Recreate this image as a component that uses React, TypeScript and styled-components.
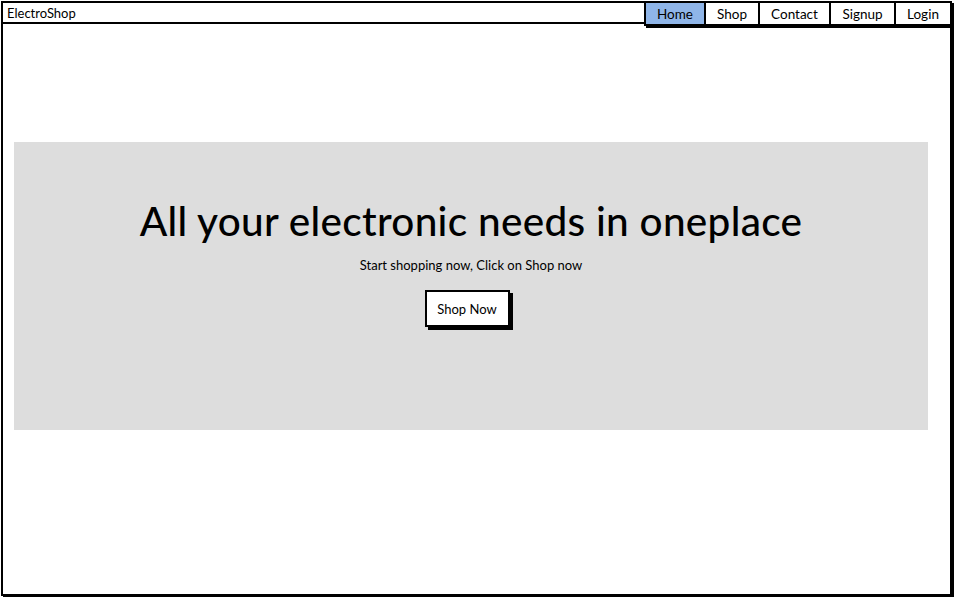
import React from "react";
import styled, { createGlobalStyle } from "styled-components";

const Global = createGlobalStyle`
  html, body { margin: 0; padding: 0; background: #fff; }
  body { font-family: "Lato", "Noto Sans", sans-serif; color: #000; }
  * { box-sizing: border-box; }
`;

const Page = styled.div`
  width: 954px;
  height: 597px;
  padding: 1px 2px 1px 1px;
`;

const Frame = styled.div`
  width: 951px;
  height: 595px;
  border: 2px solid #000;
  box-shadow: 2px 2px 0 #000;
  display: flex;
  flex-direction: column;
`;

const Header = styled.header`
  height: 21px;
  border-bottom: 2px solid #000;
  display: flex;
  align-items: center;
  justify-content: space-between;
  position: relative;
`;

const Brand = styled.div`
  font-size: 13px;
  padding: 2px 0 0 4px;
  line-height: 19px;
`;

const Nav = styled.nav`
  position: absolute;
  right: -2px;
  top: -2px;
  display: flex;
  border: 2px solid #000;
  border-right: none;
  box-shadow: 2px 2px 0 #000;
  background: #fff;
`;

const Tab = styled.a<{ $active?: boolean; $w: number }>`
  width: ${(p) => p.$w}px;
  height: 21px;
  display: flex;
  align-items: center;
  justify-content: center;
  font-size: 13.5px;
  color: #000;
  text-decoration: none;
  background: ${(p) => (p.$active ? "#8fb5e8" : "#fff")};
  border-right: 2px solid #000;
`;

const Body = styled.main`
  flex: 1;
  padding: 118px 22px 0 11px;
`;

const Hero = styled.section`
  height: 288px;
  background: #dddddd;
  display: flex;
  flex-direction: column;
  align-items: center;
  padding-top: 55px;
`;

const Title = styled.h1`
  margin: 0;
  font-size: 40.5px;
  font-weight: 500;
  line-height: 48px;
  letter-spacing: 0.3px;
`;

const Sub = styled.p`
  margin: 12px 0 0;
  font-size: 13px;
  line-height: 16px;
`;

const Button = styled.button`
  margin-top: 17px;
  margin-right: 8px;
  width: 85px;
  height: 37px;
  background: #fff;
  border: 2px solid #000;
  box-shadow: 3px 3px 0 #000;
  font-family: inherit;
  font-size: 13px;
  color: #000;
  padding: 0;
  cursor: pointer;
`;

const tabs = [
  { label: "Home", w: 60, active: true },
  { label: "Shop", w: 54 },
  { label: "Contact", w: 71 },
  { label: "Signup", w: 65 },
  { label: "Login", w: 56 },
];

export default function App() {
  return (
    <>
      <Global />
      <Page>
        <Frame>
          <Header>
            <Brand>ElectroShop</Brand>
            <Nav>
              {tabs.map((t) => (
                <Tab key={t.label} $w={t.w} $active={t.active} href="#">
                  {t.label}
                </Tab>
              ))}
            </Nav>
          </Header>
          <Body>
            <Hero>
              <Title>All your electronic needs in oneplace</Title>
              <Sub>Start shopping now, Click on Shop now</Sub>
              <Button>Shop Now</Button>
            </Hero>
          </Body>
        </Frame>
      </Page>
    </>
  );
}
